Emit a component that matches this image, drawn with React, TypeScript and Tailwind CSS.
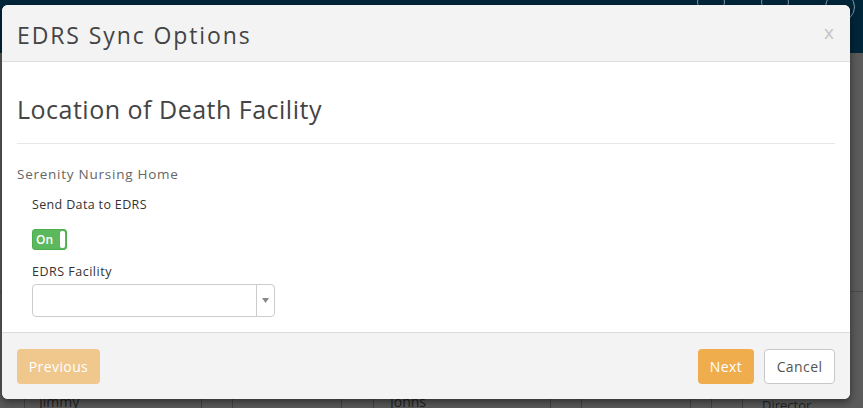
import React from "react";

export default function App() {
  const font = { fontFamily: '"Open Sans", "Noto Sans", sans-serif' };
  return (
    <div className="relative w-[863px] h-[408px] overflow-hidden bg-[#5b5b5b]" style={font}>
      {/* background page */}
      <div className="h-[53px] bg-[#00263a] flex justify-end items-start gap-[36px] pr-[8px] pt-[0px]">
        <div className="w-[28px] h-[28px] -mt-[12px] rounded-full border border-[#8a9aa5]" />
        <div className="w-[28px] h-[28px] -mt-[12px] rounded-full border border-[#8a9aa5]" />
        <div className="w-[30px] h-[30px] -mt-[8px] rounded-full border border-[#8a9aa5]" />
      </div>
      <div className="h-[239px] border-b border-[#4a4a4a]" />
      <div className="absolute left-0 right-0 top-[392px] h-[16px] flex text-[#222] text-[14px]">
        <div className="w-[25px] border-r border-[#444]" />
        <div className="w-[177px] border-r border-[#444] pl-[14px] pt-[3px] leading-none">Jimmy</div>
        <div className="w-[31px] border-r border-[#444]" />
        <div className="w-[109px] border-r border-[#444]" />
        <div className="w-[32px] border-r border-[#444]" />
        <div className="w-[177px] border-r border-[#444] pl-[16px] pt-[3px] leading-none">Johns</div>
        <div className="w-[31px] border-r border-[#444]" />
        <div className="w-[109px] border-r border-[#444]" />
        <div className="w-[21px] border-r border-[#444]" />
        <div className="w-[31px] border-r border-[#444]" />
        <div className="pl-[19px] pt-[7px] leading-none text-[13px]">Director</div>
      </div>

      {/* modal */}
      <div className="absolute left-[2px] top-[5px] w-[848px] h-[394px] rounded-[6px] overflow-hidden bg-white shadow-[0_3px_9px_rgba(0,0,0,0.5)] flex flex-col">
        <div className="h-[57px] shrink-0 bg-[#f3f3f3] border-b border-[#dcdcdc] flex items-center justify-between pl-[15px] pr-[16px]">
          <div className="mt-[4px] text-[23px] text-[#444] tracking-[1.9px] leading-none">EDRS Sync Options</div>
          <div className="text-[19px] text-[#c4c4c4] leading-none -mt-[2px]">x</div>
        </div>
        <div className="flex-1 px-[15px]">
          <div className="mt-[32px] text-[25px] text-[#444] leading-[30px] tracking-[0.5px]">Location of Death Facility</div>
          <div className="mt-[19px] border-t border-[#e8e8e8]" />
          <div className="mt-[22px] text-[13.5px] text-[#666] leading-[16px] tracking-[0.75px]">Serenity Nursing Home</div>
          <div className="pl-[15px]">
            <div className="mt-[15px] text-[12.5px] text-[#333] font-medium leading-[16px] tracking-[0.35px]">Send Data to EDRS</div>
            <div className="mt-[16px] w-[35px] h-[21px] rounded-[3px] bg-[#5cb85c] border border-[#4cae4c] flex items-center justify-between pl-[3px] pr-[1px]">
              <span className="text-white text-[12px] font-semibold leading-none">On</span>
              <span className="w-[5px] h-[17px] bg-white rounded-[2px]" />
            </div>
            <div className="mt-[14px] text-[12.5px] text-[#333] font-medium leading-[16px] tracking-[0.5px]">EDRS Facility</div>
            <div className="mt-[4px] w-[243px] h-[33px] rounded-[4px] border border-[#ccc] flex">
              <div className="flex-1" />
              <div className="w-[18px] border-l border-[#ccc] flex items-center justify-center">
                <svg width="7" height="5" viewBox="0 0 7 5"><path d="M0 0h7L3.5 5z" fill="#888" /></svg>
              </div>
            </div>
          </div>
        </div>
        <div className="h-[67px] shrink-0 bg-[#f3f3f3] border-t border-[#dcdcdc] flex items-center justify-between px-[15px]">
          <div className="w-[83px] h-[35px] rounded-[4px] bg-[#f0c78c] text-white text-[14px] tracking-[0.4px] flex items-center justify-center">Previous</div>
          <div className="flex gap-[10px]">
            <div className="w-[56px] h-[35px] rounded-[4px] bg-[#f0ad4e] text-white text-[14px] tracking-[0.4px] flex items-center justify-center">Next</div>
            <div className="w-[71px] h-[35px] rounded-[4px] bg-white border border-[#c8c8c8] text-[#555] text-[14px] tracking-[0.4px] flex items-center justify-center">Cancel</div>
          </div>
        </div>
      </div>
    </div>
  );
}
